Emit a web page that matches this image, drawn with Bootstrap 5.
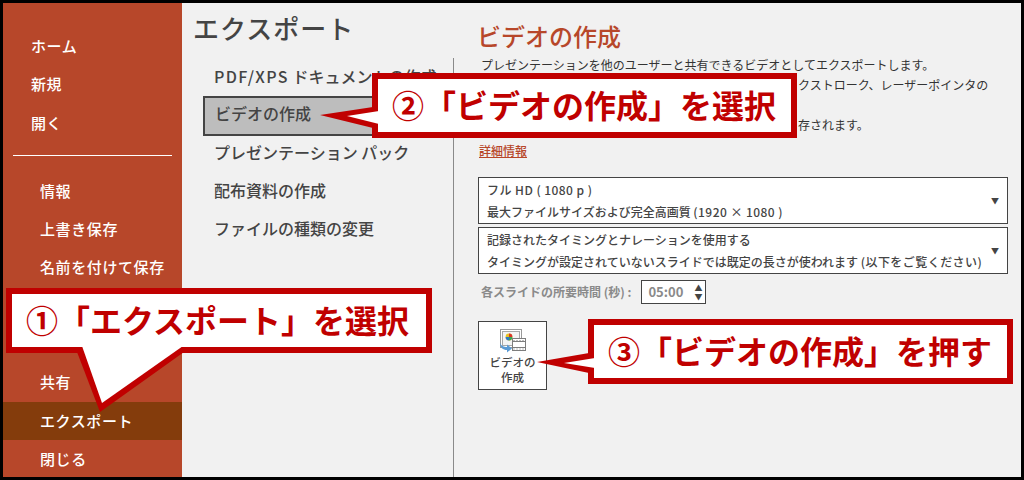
<!DOCTYPE html>
<html lang="ja">
<head>
<meta charset="utf-8">
<title>エクスポート</title>
<link href="https://cdn.jsdelivr.net/npm/bootstrap@5.3.0/dist/css/bootstrap.min.css" rel="stylesheet">
<style>
html,body{width:1024px;height:480px;overflow:hidden;margin:0}
body{background:#000;font-family:"Noto Sans CJK JP","Liberation Sans",sans-serif;color:#444}
.frame-shell{position:relative;width:1024px;height:480px;padding:3px}
.frame-inner{width:1018px;height:474px;background:#f1f1f1}
.side-col{width:179px;background:#b7472a;color:#fff;padding-top:24px;font-size:15px;font-weight:500;letter-spacing:.6px}
.side-row{height:38.3px;line-height:37.6px;padding-left:28px;white-space:nowrap}
.side-row.sub{padding-left:37px}
.side-row.now{background:#843c0c}
.side-rule{height:1px;background:#fff;margin:13px 10px 16px}
.mid-col{width:272px}
.mid-title{font-size:26px;line-height:50px;height:55px;padding-left:11px;font-weight:500;color:#444;letter-spacing:1px}
.mid-list{border-right:1px solid #8a8a8a}
.mid-item{height:37.9px;line-height:37.9px;padding-left:32px;font-size:16px;font-weight:500;white-space:nowrap;overflow:hidden}
.mid-item.on{margin:0 10px -1.6px 21px;padding-left:10px;background:#bdbdbd;border:2px solid #444;line-height:31px;height:39.8px}
.latin-wide{letter-spacing:1.4px}
.pick-wide{letter-spacing:.45px}
.right-col{padding:0 13px 0 24px}
.right-title{font-size:24px;line-height:34px;height:52px;padding-top:16px;margin-left:-1px;font-weight:500;color:#b7472a}
.desc-line{font-size:12px;line-height:20px;height:20px;padding-left:3px;white-space:nowrap;color:#333}
.desc-cut{padding-left:320px}
.more-link{font-size:12px;line-height:18px;color:#b7472a;text-decoration:underline;font-weight:500}
.link-wrap{height:42px;padding-top:2px;padding-left:1px}
.pick-box{background:#fff;border:1px solid #444;height:47px;padding:2px 9px 2px 8px;font-size:12px;line-height:22px;color:#444;white-space:nowrap;margin-bottom:3px;font-weight:500}
.pick-arrow{font-size:8px;color:#444;margin-right:-1px}
.dur-label{color:#8a8a8a;font-size:12px;font-weight:700;padding-left:3px}
.dur-box{width:65px;height:24px;border:1px solid #444;background:#fff;color:#8a8a8a;font-size:13px;font-weight:700;padding:0 3px 0 6px;margin-left:10px}
.dur-row{margin-top:6px}
.dur-spin{font-size:8px;line-height:9px;color:#444}
.make-btn{width:69px;height:69px;border:1px solid #444;background:#fff;font-size:11.5px;line-height:15px;color:#444;font-weight:500;padding-top:6px;margin-top:14px}
.make-btn svg{display:block;margin:0 auto 2px}
.dur-row + .make-btn{margin-top:17px}
.note-box{position:absolute;background:#fff;border:6px solid #c00000;color:#c00000;font-weight:700;font-size:32px;line-height:1;white-space:nowrap;padding:0 0 4px 14px}
.note-one{left:6px;top:288px;width:426px;height:65px}
.note-two{left:372px;top:73px;width:425px;height:65px}
.note-three{left:588px;top:319px;width:425px;height:65px}
.note-tails{position:absolute;left:0;top:0}
</style>
</head>
<body>
<div class="frame-shell">
  <div class="frame-inner d-flex">
    <div class="side-col flex-shrink-0">
      <div class="side-row">ホーム</div>
      <div class="side-row">新規</div>
      <div class="side-row">開く</div>
      <div class="side-rule"></div>
      <div class="side-row sub">情報</div>
      <div class="side-row sub">上書き保存</div>
      <div class="side-row sub">名前を付けて保存</div>
      <div class="side-row sub"></div>
      <div class="side-row sub"></div>
      <div class="side-row sub">共有</div>
      <div class="side-row sub now">エクスポート</div>
      <div class="side-row sub">閉じる</div>
    </div>
    <div class="mid-col d-flex flex-column flex-shrink-0">
      <div class="mid-title">エクスポート</div>
      <div class="mid-list flex-grow-1">
        <div class="mid-item"><span class="latin-wide">PDF/XPS</span> ドキュメントの作成</div>
        <div class="mid-item on">ビデオの作成</div>
        <div class="mid-item">プレゼンテーション パック</div>
        <div class="mid-item">配布資料の作成</div>
        <div class="mid-item">ファイルの種類の変更</div>
      </div>
    </div>
    <div class="right-col flex-grow-1">
      <div class="right-title">ビデオの作成</div>
      <div class="desc-line">プレゼンテーションを他のユーザーと共有できるビデオとしてエクスポートします。</div>
      <div class="desc-line desc-cut">クストローク、レーザーポインタの</div>
      <div class="desc-line"></div>
      <div class="desc-line desc-cut">存されます。</div>
      <div class="link-wrap"><span class="more-link">詳細情報</span></div>
      <div class="pick-box d-flex align-items-center justify-content-between">
        <div><span class="pick-wide">フル HD ( 1080 p )</span><br>最大ファイルサイズおよび完全高画質 <span class="pick-wide">(1920 × 1080 )</span></div>
        <span class="pick-arrow">▼</span>
      </div>
      <div class="pick-box d-flex align-items-center justify-content-between">
        <div>記録されたタイミングとナレーションを使用する<br>タイミングが設定されていないスライドでは既定の長さが使われます <span class="pick-wide">(以下をご覧ください)</span></div>
        <span class="pick-arrow">▼</span>
      </div>
      <div class="dur-row d-flex align-items-center">
        <span class="dur-label">各スライドの所要時間 (秒) :</span>
        <div class="dur-box d-flex align-items-center justify-content-between">
          <span>05:00</span>
          <span class="dur-spin d-flex flex-column"><span>▲</span><span>▼</span></span>
        </div>
      </div>
      <div class="make-btn text-center">
        <svg width="28" height="25" viewBox="0 0 28 25" aria-hidden="true">
          <rect x="1.5" y="1.5" width="21" height="18" fill="#fff" stroke="#9a9a9a"/>
          <rect x="3.5" y="3.5" width="17" height="14" fill="#f4f4f4" stroke="#a8a8a8"/>
          <circle cx="10" cy="9" r="3.4" fill="#e8c21f"/>
          <path d="M10 9V5.6A3.4 3.4 0 0 1 13.4 9Z" fill="#d9352b"/>
          <path d="M10 9H6.6A3.4 3.4 0 0 0 10 12.4Z" fill="#2f78c8"/>
          <path d="M10 9H13.4A3.4 3.4 0 0 1 10 12.4Z" fill="#3aa655"/>
          <rect x="13.5" y="10.5" width="13" height="12" fill="#fff" stroke="#7d7d7d"/>
          <path d="M13.5 13.5H26.5M13.5 19.5H26.5" stroke="#7d7d7d"/>
          <path d="M15 12V13M18 12V13M21 12V13M24 12V13M15 20.5V21.5M18 20.5V21.5M21 20.5V21.5M24 20.5V21.5" stroke="#7d7d7d"/>
          <path d="M1 14.5C2 18 5 19 8 19V16.5L13 20.5L8 24.5V22C4 22 1 19.5 1 14.5Z" fill="#5b9bd5"/>
        </svg>
        ビデオの<br>作成
      </div>
    </div>
  </div>
  <div class="note-box note-one d-flex align-items-center">①「エクスポート」を選択</div>
  <div class="note-box note-two d-flex align-items-center">②「ビデオの作成」を選択</div>
  <div class="note-box note-three d-flex align-items-center">③「ビデオの作成」を押す</div>
  <svg class="note-tails" width="1024" height="480" viewBox="0 0 1024 480" aria-hidden="true">
    <polygon points="77,352 100,412 184,352" fill="#c00000"/>
    <polygon points="82,346 102,403 183,346" fill="#fff"/>
    <polygon points="373,107 320,115 373,128" fill="#c00000"/>
    <polygon points="379,111 347,116 379,124" fill="#fff"/>
    <polygon points="589,353 537,362 589,373" fill="#c00000"/>
    <polygon points="595,358 564,363 595,368" fill="#fff"/>
  </svg>
</div>
<script src="https://cdn.jsdelivr.net/npm/bootstrap@5.3.0/dist/js/bootstrap.bundle.min.js"></script>
</body>
</html>
